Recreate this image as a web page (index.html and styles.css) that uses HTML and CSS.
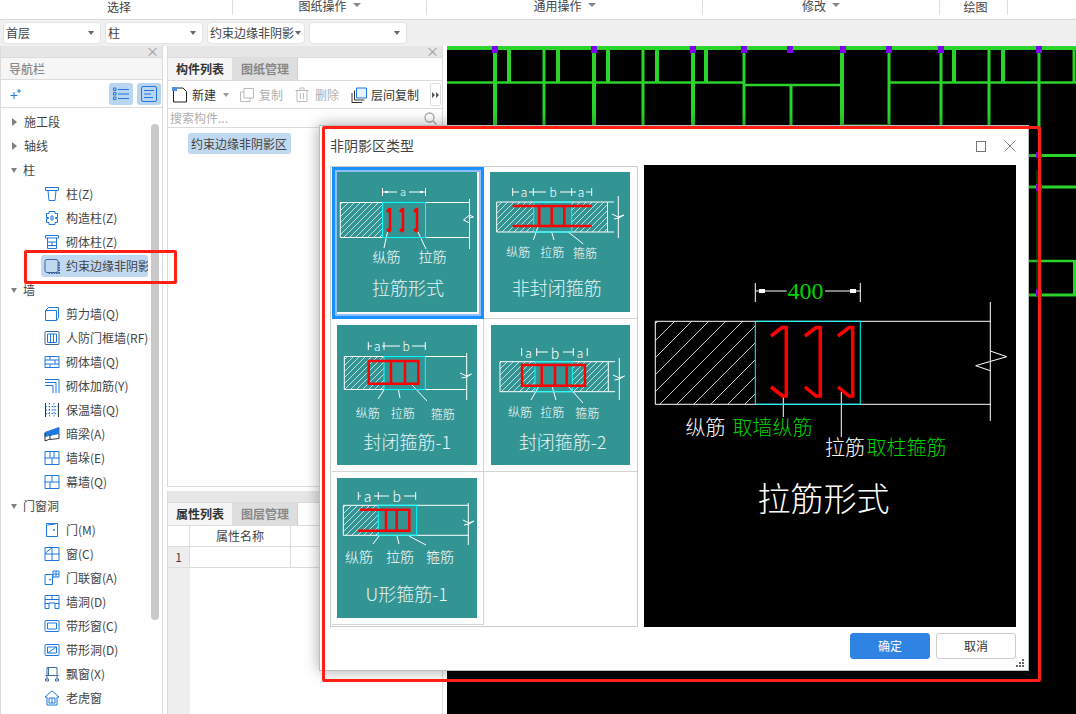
FILE: index.html
```html
<!DOCTYPE html>
<html lang="zh-CN">
<head>
<meta charset="utf-8">
<title>非阴影区类型</title>
<link rel="stylesheet" href="styles.css">
</head>
<body>
<svg class="defs" width="0" height="0">
  <defs>
    <pattern id="h6" patternUnits="userSpaceOnUse" width="6" height="6"><path d="M-1 7L7 -1M-1 1L1 -1M5 7L7 5" stroke="#fff" stroke-width=".7"/></pattern>
    <pattern id="h17" patternUnits="userSpaceOnUse" width="17" height="17"><path d="M0 17L17 0" stroke="#fff" stroke-width=".8"/></pattern>
  </defs>
</svg>

<header class="ribbon">
  <div class="rb rb-1"><span class="rb-low">选择</span></div>
  <div class="rb rb-2"><span>图纸操作</span><i class="caret caret-rb"></i></div>
  <div class="rb rb-3"><span>通用操作</span><i class="caret caret-rb"></i></div>
  <div class="rb rb-4"><span>修改</span><i class="caret caret-rb"></i></div>
  <div class="rb rb-5"><span class="rb-low">绘图</span></div>
</header>

<div class="selects">
  <div class="sel"><span>首层</span><i class="caret"></i></div>
  <div class="sel"><span>柱</span><i class="caret"></i></div>
  <div class="sel"><span>约束边缘非阴影</span><i class="caret"></i></div>
  <div class="sel"><span></span><i class="caret"></i></div>
</div>

<main class="work">
  <aside class="nav">
    <div class="bar"><span class="x">×</span></div>
    <div class="nav-title">导航栏</div>
    <div class="nav-tools">
      <svg class="plus" width="14" height="14" viewBox="0 0 14 14"><path d="M5 5v7M1.500 8.500h7M10 2v4M8 4h4" stroke="#1f78e0" fill="none"/></svg>
      <span class="nav-btn"><svg width="16" height="14" viewBox="0 0 16 14"><path d="M5 2.500h11M5 7h11M5 11.500h11" stroke="#1f78e0" fill="none"/><path d="M.5 1h2.500v2.500H.5zM.5 5.500h2.500V8H.5zM.5 10h2.500v2.500H.5z" stroke="#1f78e0" fill="none"/></svg></span>
      <span class="nav-btn"><svg width="16" height="16" viewBox="0 0 16 16"><rect x=".5" y=".5" width="15" height="15" rx="1.500" stroke="#1f78e0" fill="none"/><path d="M3 4.500h10M3 8h7M3 11.500h9" stroke="#1f78e0" fill="none"/></svg></span>
    </div>
    <div class="tree">
      <div class="scroll"></div>
      <div class="node"><i class="tri-r"></i>施工段</div>
      <div class="node"><i class="tri-r"></i>轴线</div>
      <div class="node"><i class="tri-d"></i>柱</div>
      <div class="leaf"><svg class="ic" viewBox="0 0 16 16"><path d="M1.500 1.500h13v3h-13zM4 4.500l1 10h6l1-10"/></svg>柱(Z)</div>
      <div class="leaf"><svg class="ic" viewBox="0 0 16 16"><path d="M5 1.500h6v2h2.500v4h-2v1h2v4H11v2H5v-2H2.500v-4h2v-1h-2v-4H5z"/><path d="M7 6h2v4H7z"/></svg>构造柱(Z)</div>
      <div class="leaf"><svg class="ic" viewBox="0 0 16 16"><path d="M1.500 1.500h13v2.500h-13zM3.500 4v10.500h9V4M3.500 8h9M3.500 11.500h9M8 8v3.500"/></svg>砌体柱(Z)</div>
      <div class="leaf"><span class="leaf-sel"><svg class="ic ic-dark" viewBox="0 0 16 16"><rect x="1" y="1.500" width="13" height="13" rx="2"/><path d="M15 4v11H4" stroke-dasharray="1.500 1" stroke-width="2"/></svg><span class="leaf-clip">约束边缘非阴影</span></span></div>
      <div class="node"><i class="tri-d"></i>墙</div>
      <div class="leaf"><svg class="ic" viewBox="0 0 16 16"><path d="M1.500 4.500h11v10h-11zM1.500 4.500l3-3h10v10l-2 3"/></svg>剪力墙(Q)</div>
      <div class="leaf"><svg class="ic ic-dark" viewBox="0 0 16 16"><rect x="1" y="1.500" width="14" height="13" rx="1"/><path d="M3.500 4h9v8.500h-9zM6.500 4v8.500M9.500 4v8.500" stroke="#1f78e0"/></svg>人防门框墙(RF)</div>
      <div class="leaf"><svg class="ic" viewBox="0 0 16 16"><path d="M1 2.500h14v11H1zM1 6h14M1 10h14M6 2.500V6M11 6v4M6 10v3.500"/></svg>砌体墙(Q)</div>
      <div class="leaf"><svg class="ic" viewBox="0 0 16 16"><path d="M1 1.500h14v13.500M1 4.500h11V15M1 7.500h8V15"/></svg>砌体加筋(Y)</div>
      <div class="leaf"><svg class="ic" viewBox="0 0 16 16"><path d="M1.500 1v14M14.500 1v14" stroke="#333"/><path d="M5.500 1v14M10 1v14M1.500 4.500h13M1.500 8h13M1.500 11.500h13" stroke-dasharray="1.500 1.500"/></svg>保温墙(Q)</div>
      <div class="leaf"><svg class="ic" viewBox="0 0 16 16"><path d="M1 6.500L15 1.500v6L1 10.500z" fill="#1f78e0"/><path d="M1 7v8l5-2V8.500M15 7.500v5l-9 1" stroke="#333"/></svg>暗梁(A)</div>
      <div class="leaf"><svg class="ic" viewBox="0 0 16 16"><path d="M1 1.500h14v13H1zM1 8h14M6 1.500V8M10 1.500V8M8 8v6.500"/></svg>墙垛(E)</div>
      <div class="leaf"><svg class="ic" viewBox="0 0 16 16"><path d="M1 1.500h14v13H1zM1 8h14M8 1.500V8M6 8v6.500"/></svg>幕墙(Q)</div>
      <div class="node"><i class="tri-d"></i>门窗洞</div>
      <div class="leaf"><svg class="ic" viewBox="0 0 16 16"><path d="M2.500 1.500h11v13h-11zM3.500 3l8-1"/><circle cx="10" cy="8" r=".6"/></svg>门(M)</div>
      <div class="leaf"><svg class="ic" viewBox="0 0 16 16"><path d="M1 1.500h14v13H1zM1 8h14M8 1.500v13M1.500 7l6-5"/></svg>窗(C)</div>
      <div class="leaf"><svg class="ic" viewBox="0 0 16 16"><path d="M1 4.500h7.500v10H1zM9 1h6v6H9zM12 1v6M9 4h6"/><circle cx="6" cy="9.500" r=".6"/></svg>门联窗(A)</div>
      <div class="leaf"><svg class="ic" viewBox="0 0 16 16"><path d="M1 1.500h14v13h-4V9H5v5.500H1zM1 5.500h14M8 1.500v4M1 9.500h4M11 9.500h4"/></svg>墙洞(D)</div>
      <div class="leaf"><svg class="ic" viewBox="0 0 16 16"><rect x="1" y="2.500" width="14" height="11" rx="1"/><path d="M3.500 5h9v6h-9z"/></svg>带形窗(C)</div>
      <div class="leaf"><svg class="ic" viewBox="0 0 16 16"><rect x="1" y="2.500" width="14" height="11" rx="1"/><path d="M3.500 5h9v6h-9zM3.500 11l9-6"/></svg>带形洞(D)</div>
      <div class="leaf"><svg class="ic" viewBox="0 0 16 16"><path d="M3 1.500h10V13M3 1.500V13M4.500 1.500V9M1.500 9.500h13M1.500 13h3v2h-3zM11.500 13h3v2h-3z" stroke="#3a6ea5"/></svg>飘窗(X)</div>
      <div class="leaf"><svg class="ic" viewBox="0 0 16 16"><path d="M8 .8L1 7l2 0v8h10V7l2 0zM5 8h6v5H5zM8 8v5"/></svg>老虎窗</div>
    </div>
  </aside>

  <section class="mid">
    <div class="panel panel-top">
      <div class="bar"><span class="x">×</span></div>
      <div class="tabs"><span class="tab on">构件列表</span><span class="tab">图纸管理</span></div>
      <div class="tools">
        <span class="tool"><svg class="tic" viewBox="0 0 16 16"><path d="M1.500 4v11h13V4.500L11 1H5" stroke="#222" fill="none"/><path d="M0 0h5v4H0z" fill="#4a90e2"/></svg>新建<i class="caret caret-tool"></i></span>
        <span class="tool off"><svg class="tic" viewBox="0 0 16 16"><path d="M5 1.500h9.500v9.500H5zM1.500 5H5M1.500 5v9.500H11V11" stroke="#bbb" fill="none"/></svg>复制</span>
        <span class="tool off"><svg class="tic" viewBox="0 0 16 16"><path d="M.5 3.500h13M5 3.500V1h4v2.500M2 3.500v11h10v-11M5.500 6v6M8.500 6v6" stroke="#bbb" fill="none"/></svg>删除</span>
        <span class="tool"><svg class="tic" viewBox="0 0 16 16"><path d="M5.500 1h10v10h-10z" stroke="#1f78e0" fill="#e8f2fd"/><path d="M3.500 3.500V13h10M1 6v9.500h10" stroke="#333" fill="none"/></svg>层间复制</span>
        <span class="more"><svg width="8" height="8" viewBox="0 0 8 8"><path d="M0 1l3 3-3 3zM4 1l3 3-3 3z" fill="#555"/></svg></span>
      </div>
      <div class="search"><span>搜索构件...</span><svg width="13" height="13" viewBox="0 0 13 13"><circle cx="5.500" cy="5.500" r="4.500" fill="none" stroke="#aaa" stroke-width="1.300"/><path d="M9 9l3.500 3.500" stroke="#aaa" stroke-width="1.300"/></svg></div>
      <div class="list"><span class="pill">约束边缘非阴影区</span></div>
    </div>
    <div class="panel panel-bottom">
      <div class="bar"></div>
      <div class="tabs tabs-b"><span class="tab on">属性列表</span><span class="tab">图层管理</span></div>
      <div class="props">
        <div class="p-h"></div><div class="p-h">属性名称</div><div class="p-h"></div>
        <div class="p-n">1</div><div class="p-c"></div><div class="p-c"></div>
        <div class="p-fill"></div><div class="p-blank"></div>
      </div>
    </div>
  </section>

  <svg class="canvas" viewBox="447 46 629 668" preserveAspectRatio="none">
    <g fill="none" stroke="#2ad42a">
      <path stroke-width="4" d="M447 48H1076M495 48V130M594 48V130M693 48V130M842 48V130M509 48V82M558 48V82M608 48V82M657 48V82M706 48V82M954 48V82M1003 48V82"/>
      <path stroke-width="3" d="M544 48V130M643 48V130M744 48V130M791 85V130M889 48V130M941 48V130M989 48V130M1074 48V82M1039 48V130"/>
      <path stroke-width="2.500" d="M447 82.500H744M889 82.500H1076M744 85H843M1028 261H1074"/>
      <path stroke-width="3" d="M1028 155.500H1076M1028 187H1076M1028 295H1076M1074.500 260V296"/>
      <path stroke-width="1" stroke="#176d17" d="M843 124.500H889M1037 170V296"/>
    </g>
    <g fill="#8000f0">
      <rect x="492" y="46" width="6" height="7"/><rect x="591" y="46" width="6" height="7"/><rect x="690" y="46" width="6" height="7"/><rect x="741" y="46" width="6" height="7"/><rect x="787" y="46" width="6" height="7"/><rect x="840" y="46" width="6" height="7"/><rect x="886" y="46" width="6" height="7"/><rect x="938" y="46" width="6" height="7"/><rect x="1036" y="46" width="6" height="7"/>
      <rect x="1036" y="152" width="6" height="6"/><rect x="1036" y="184" width="6" height="7"/><rect x="1036" y="289" width="6" height="7"/>
    </g>
  </svg>
</main>

<div class="dialog">
  <div class="d-title"><span>非阴影区类型</span>
    <span class="d-ctrl">
      <svg width="10" height="11" viewBox="0 0 10 11"><rect x=".5" y=".5" width="9" height="10" fill="none" stroke="#777"/></svg>
      <svg width="12" height="12" viewBox="0 0 12 12"><path d="M.5 .5l11 11M11.500 .5l-11 11" stroke="#888" fill="none"/></svg>
    </span>
  </div>
  <div class="d-body">
    <div class="d-grid">
      <div class="cell cell-sel">
        <svg class="thumb" viewBox="0 0 140 140">
          <rect x="3.300" y="30.500" width="42" height="35" class="hatch"/>
          <path class="w" d="M3.300 30.500H132.500M3.300 65.500H132.500M3.300 30.500V65.500M132.500 27V77M132.500 43l-6 5 6 3M132.500 43l4 2-4 1M45.500 16V24M88.500 16V24M45.500 20H60M72 20H88.500M50.500 60L47 76M81 60L89 77"/>
          <path class="blk" d="M48 19h3v2h-3zM83 19h3v2h-3z"/>
          <rect x="45.500" y="30.500" width="43" height="35" class="c"/>
          <path class="r r3" d="M53 36V59M50 40l3-4M50 57l3 3M66 36V59M63 40l3-4M63 57l3 3M80 36V59M77 40l3-4M77 57l3 3"/>
          <text x="49.500" y="84" class="t14">纵筋</text><text x="95.500" y="84" class="t14">拉筋</text>
          <text x="66" y="19" class="t10">a</text>
          <text x="71" y="115" class="t18">拉筋形式</text>
        </svg>
      </div>
      <div class="cell cell-r">
        <svg class="thumb" viewBox="0 0 140 140">
          <rect x="6.700" y="30" width="37" height="30" class="hatch"/><rect x="81.700" y="30" width="36" height="30" class="hatch"/>
          <path class="w" d="M6.700 30H124M6.700 60H124M6.700 30V60M117.500 30V60M128.300 24V66M122 42l6 3 6-2-5 3-5 1M22.700 16V24M43.300 16V24M81.700 16V24M101.700 16V24M22.700 20H29M39 20H56M70 20H86M96 20H101.700M48.300 54l-5 14M61.700 60L64 68M78.300 60L93.300 72"/>
          <rect x="43.700" y="30" width="38" height="30" class="c"/>
          <path class="r r3" d="M22.700 34H101.700M22.700 54H101.700M49.300 34V54M61.700 34V54M74.300 34V54"/>
          <text x="34" y="19.500" class="t12">a</text><text x="63" y="19.500" class="t12">b</text><text x="91" y="19.500" class="t12">a</text>
          <text x="28.300" y="79" class="t12">纵筋</text><text x="62.300" y="79" class="t12">拉筋</text><text x="95" y="80" class="t12">箍筋</text>
          <text x="66.700" y="115" class="t18">非封闭箍筋</text>
        </svg>
      </div>
      <div class="cell">
        <svg class="thumb" viewBox="0 0 140 140">
          <rect x="7.300" y="31.500" width="40" height="33" class="hatch"/>
          <path class="w" d="M7.300 31.500H129.700M7.300 64.500H129.700M7.300 31.500V64.500M129.700 28V75M123 48l6.500 3 5-2-5 3-5 1M31.300 17V25M47 17V25M88.300 17V25M31.300 21H35M45 21H63M75 21H88.300M47 65L41 74M61.500 65L63 73M75 60L90 76"/>
          <rect x="47" y="31.500" width="41.300" height="33" class="c"/>
          <path class="r r3" d="M31.700 36H81.300V58.700H31.700zM54 36V58.700M68 36V58.700"/>
          <text x="40.300" y="20.500" class="t12">a</text><text x="69" y="20.500" class="t12">b</text>
          <text x="30.700" y="87" class="t12">纵筋</text><text x="65.700" y="87" class="t12">拉筋</text><text x="105.700" y="88" class="t12">箍筋</text>
          <text x="70.300" y="115.500" class="t18">封闭箍筋-1</text>
        </svg>
      </div>
      <div class="cell cell-r">
        <svg class="thumb" viewBox="0 0 140 140">
          <rect x="0" y="0" width="1" height="140" class="blank"/>
          <rect x="10" y="36.700" width="35" height="30" class="hatch"/><rect x="82.300" y="36.700" width="36" height="30" class="hatch"/>
          <path class="w" d="M10 36.700H125M10 66.700H125M10 36.700V66.700M118.300 36.700V66.700M129.300 33V75M123 50l6.500 3 5-2-5 3-5 1M31.700 23V31M46.700 23V31M83.300 23V31M97.300 23V31M46.700 27H58M73 27H83.300M49 61L41 75M62 61L66 75M78 61L93 78"/>
          <rect x="45" y="36.700" width="37.300" height="30" class="c"/>
          <path class="r r3" d="M32 40H95V60.700H32zM51.700 40V60.700M65 40V60.700M76.700 40V60.700"/>
          <text x="38.500" y="27" class="t12">a</text><text x="65" y="27.500" class="t14">b</text><text x="90" y="27" class="t12">a</text>
          <text x="30" y="86" class="t12">纵筋</text><text x="62.300" y="86" class="t12">拉筋</text><text x="97.300" y="87" class="t12">箍筋</text>
          <text x="72.700" y="115.500" class="t18">封闭箍筋-2</text>
        </svg>
      </div>
      <div class="cell cell-end">
        <svg class="thumb" viewBox="0 0 140 140">
          <rect x="6.300" y="27.300" width="35" height="30" class="hatch"/>
          <path class="w" d="M6.300 27.300H131.300M6.300 57.300H131.300M6.300 27.300V57.300M131.300 25V67M126 42l6 3 5-2-5 3-5 1M21.300 14V22M41.300 14V22M78.700 14V22M21.300 18H24M37 18H52M67 18H78.700M42 58L36 66M60 58L62 66M72 58L89 67"/>
          <rect x="41.300" y="27.300" width="38.400" height="30" class="c"/>
          <path class="r r3" d="M23 31.700H72.300V52.700H21.300M49 31.700V52.700M59.700 31.700V52.700"/>
          <text x="30.700" y="18" class="t14">a</text><text x="59.700" y="18" class="t14">b</text>
          <text x="22" y="78" class="t14">纵筋</text><text x="63" y="78" class="t14">拉筋</text><text x="103" y="78" class="t14">箍筋</text>
          <text x="69.700" y="115" class="t18">U形箍筋-1</text>
        </svg>
      </div>
    </div>
    <svg class="preview" viewBox="0 0 372 462">
      <rect x="11.300" y="156.300" width="100" height="83" fill="url(#h17)"/>
      <path class="w" d="M11.300 156.300H346.300M11.300 239.300H346.300M11.300 156.300V239.300M346.300 137V256M346.300 186L362.700 191.700 331.700 200.700 346.300 205.700M111.300 118V137M216.300 118V137M111.300 126H142.700M181 126H216.300M139.300 232V252M197.300 227V272"/>
      <path fill="#fff" d="M115 124h6v4h-6zM206 124h6v4h-6z"/>
      <rect x="111.300" y="156.300" width="105" height="83" class="c"/>
      <path class="r r4" d="M127 171L138 162.500H142.300V231H138.500L127 222M161 171L172 162.500H176.300V231H172L161 222M194 171L205 162.500H208.700V231H205L194 222"/>
      <text x="161.500" y="125.500" class="p-400">400</text>
      <text x="61.500" y="261" class="p-w">纵筋</text>
      <text x="128.500" y="261" class="p-g">取墙纵筋</text>
      <text x="201" y="281" class="p-w">拉筋</text>
      <text x="262.500" y="281" class="p-g">取柱箍筋</text>
      <text x="179.500" y="332" class="p-t">拉筋形式</text>
    </svg>
  </div>
  <div class="d-foot">
    <button class="btn btn-ok">确定</button>
    <button class="btn">取消</button>
  </div>
  <svg class="grip" width="9" height="9" viewBox="0 0 9 9"><path d="M6 0h2v2H6zM3 3h2v2H3zM6 3h2v2H6zM0 6h2v2H0zM3 6h2v2H3zM6 6h2v2H6z" fill="#666"/></svg>
</div>

<div class="mark mark-tree"></div>
<div class="mark mark-dialog"></div>
</body>
</html>
```

FILE: styles.css
```css
* { box-sizing: border-box; }
html, body { margin: 0; padding: 0; }
body {
  position: relative;
  width: 1076px;
  height: 714px;
  overflow: hidden;
  background: #fff;
  color: #333;
  font: 12px/16px "Noto Sans CJK SC", "Noto Sans", sans-serif;
  display: flex;
  flex-direction: column;
}
.defs { position: absolute; }

.ribbon {
  flex: none;
  display: flex;
  height: 20px;
  border-bottom: 1px solid #d9d9d9;
  background: #fff;
  overflow: hidden;
}
.rb {
  height: 15px;
  border-right: 1px solid #dedede;
  display: flex;
  justify-content: center;
  gap: 6px;
  line-height: 12px;
  color: #444;
}
.rb-low { line-height: 14px; }
.rb-1 { width: 233px; padding-left: 6px; }
.rb-2 { width: 194px; }
.rb-3 { width: 276px; }
.rb-4 { width: 237px; }
.rb-5 { width: 68px; padding-left: 4px; }
.caret {
  display: inline-block;
  width: 0;
  height: 0;
  border-left: 3.500px solid transparent;
  border-right: 3.500px solid transparent;
  border-top: 4px solid #666;
}
.caret-rb { margin-top: 3px; border-left-width: 4px; border-right-width: 4px; border-top-color: #888; }

.selects {
  flex: none;
  height: 26px;
  background: #f0f0f0;
  display: flex;
  gap: 4px;
  padding: 2px 0 0 3px;
}
.sel {
  width: 98px;
  height: 22px;
  background: #fff;
  border: 1px solid #e4e4e4;
  border-radius: 4px;
  display: flex;
  align-items: center;
  justify-content: space-between;
  padding: 0 6px 0 2px;
  white-space: nowrap;
  color: #444;
}
.sel:nth-child(3) { padding-right: 3px; }

.work { flex: 1; display: flex; min-height: 0; }

.bar {
  height: 12px;
  background: #e6e6e6;
  border-bottom: 1px solid #dcdcdc;
  position: relative;
}
.x {
  position: absolute;
  right: 3px;
  top: -2px;
  font-size: 13px;
  line-height: 14px;
  color: #999;
}

.nav {
  flex: none;
  width: 163px;
  border-left: 1px solid #dcdcdc;
  border-right: 1px solid #dcdcdc;
  display: flex;
  flex-direction: column;
}
.nav-title {
  height: 22px;
  line-height: 21px;
  padding-left: 8px;
  color: #8a8a8a;
  font-weight: 500;
  background: #f6f6f6;
  border-bottom: 1px solid #dcdcdc;
}
.nav-tools {
  height: 28px;
  border-bottom: 1px solid #dcdcdc;
  display: flex;
  align-items: center;
  padding-left: 8px;
  gap: 4px;
}
.plus { margin-right: 82px; }
.nav-btn {
  width: 24px;
  height: 22px;
  background: #b9d5f2;
  border-radius: 3px;
  display: flex;
  align-items: center;
  justify-content: center;
}
.tree { flex: 1; position: relative; padding-top: 2px; overflow: hidden; }
.scroll {
  position: absolute;
  left: 150px;
  top: 16px;
  width: 8px;
  height: 496px;
  background: #c9c9c9;
  border-radius: 4px;
}
.node, .leaf {
  height: 24px;
  line-height: 24px;
  display: flex;
  align-items: center;
  white-space: nowrap;
  color: #444;
}
.node { padding-left: 11px; }
.tri-r {
  width: 0; height: 0; margin: 0 7px 0 0;
  border-top: 4px solid transparent;
  border-bottom: 4px solid transparent;
  border-left: 5px solid #808080;
}
.tri-d {
  width: 0; height: 0; margin: 0 6px 0 -1px;
  border-left: 3.500px solid transparent;
  border-right: 3.500px solid transparent;
  border-top: 5px solid #808080;
}
.leaf { padding-left: 43px; }
.ic {
  flex: none;
  width: 16px;
  height: 16px;
  margin-right: 6px;
  fill: none;
  stroke: #1f78e0;
  stroke-width: 1;
}
.ic-dark { stroke: #3a6596; }
.leaf-sel {
  display: flex;
  align-items: center;
  width: 107px;
  height: 22px;
  margin-left: -3px;
  padding-left: 3px;
  background: #c1d8f1;
  border-radius: 3px;
  overflow: hidden;
}
.leaf-clip { overflow: hidden; }

.mid {
  flex: none;
  width: 276px;
  margin-left: 4px;
  display: flex;
  flex-direction: column;
  gap: 4px;
}
.panel {
  border-left: 1px solid #dcdcdc;
  border-right: 1px solid #dcdcdc;
  display: flex;
  flex-direction: column;
}
.panel-top { height: 441px; border-bottom: 1px solid #dcdcdc; }
.panel-bottom { flex: 1; min-height: 0; }
.tabs {
  height: 23px;
  display: flex;
  background: #fff;
  border-bottom: 1px solid #dcdcdc;
}
.tabs-b { height: 23px; margin-top: 0; }
.tab {
  width: 65px;
  text-align: center;
  line-height: 22px;
  background: #dedede;
  color: #888;
  font-weight: 700;
  border-right: 1px solid #d0d0d0;
}
.tab.on { background: #f5f5f5; color: #333; border-right: 1px solid #dcdcdc; }
.tools {
  height: 28px;
  border-bottom: 1px solid #dcdcdc;
  display: flex;
  align-items: center;
  padding-left: 4px;
  position: relative;
}
.tool { display: flex; align-items: center; margin-right: 12px; color: #333; }
.tool.off { color: #b0b0b0; }
.tic { width: 16px; height: 16px; margin-right: 4px; }
.caret-tool { margin-left: 7px; margin-right: -2px; border-top-color: #999; }
.more {
  position: absolute;
  right: 1px;
  top: 2px;
  width: 11px;
  height: 23px;
  border: 1px solid #e0e0e0;
  border-radius: 2px;
  display: flex;
  align-items: center;
  justify-content: center;
}
.search {
  height: 19px;
  border-bottom: 1px solid #dcdcdc;
  display: flex;
  align-items: center;
  justify-content: space-between;
  padding: 0 5px 0 2px;
  color: #b0b0b0;
}
.list { flex: 1; padding: 5px 0 0 20px; }
.pill {
  display: inline-block;
  width: 103px;
  height: 21px;
  line-height: 21px;
  padding-left: 3px;
  background: #c1d8f1;
  border-radius: 3px;
  color: #444;
  white-space: nowrap;
}
.props {
  flex: 1;
  display: grid;
  grid-template-columns: 22px 101px 1fr;
  grid-template-rows: 21px 21px 1fr;
}
.p-h, .p-c, .p-n {
  border-right: 1px solid #dcdcdc;
  border-bottom: 1px solid #dcdcdc;
  text-align: center;
  line-height: 20px;
  color: #444;
}
.p-n { background: #eee; }
.p-fill { background: #eee; }
.p-blank { grid-column: 2 / 4; }

.canvas {
  flex: none;
  width: 629px;
  height: 668px;
  margin-left: 4px;
  background: #000;
  display: block;
}

.dialog {
  position: absolute;
  left: 319px;
  top: 125px;
  width: 710px;
  height: 546px;
  background: #fff;
  border: 1px solid #bdbdbd;
  box-shadow: 0 0 14px rgba(0, 0, 0, .35);
  padding-left: 10px;
}
.d-title {
  height: 40px;
  display: flex;
  justify-content: space-between;
  align-items: center;
  font-size: 14px;
  color: #444;
  padding: 0 12px 2px 0;
}
.d-ctrl { display: flex; gap: 18px; align-items: center; padding-top: 2px; }
.d-body { display: flex; gap: 6px; margin-top: -1px; }
.d-grid {
  width: 308px;
  margin-top: 1px;
  height: 461px;
  border: 1px solid #ccc;
  padding: 0 0 1px 1px;
  display: grid;
  grid-template-columns: 152px 153px;
  grid-template-rows: 152px 153px 153px;
}
.cell {
  border-right: 1px solid #d4d4d4;
  border-bottom: 1px solid #d4d4d4;
  padding: 6px 0 0 5px;
}
.cell-r { border-right: 0; padding-left: 6px; }
.cell:nth-child(2) { padding-top: 5px; }
.cell-sel {
  padding-top: 5px;
  position: relative;
  border-bottom: 0;
  border-right: 0;
  box-shadow: inset 0 0 0 3px #1890ff, inset 0 0 0 5px #8fc0f5;
}
.thumb { display: block; width: 140px; height: 140px; background: #339494; }
.blank { fill: #fff; }
.blk { fill: #fff; }
.hatch { fill: url(#h6); }
.w { fill: none; stroke: #fff; stroke-width: 1; }
.c { fill: none; stroke: #0ff; stroke-width: 1; }
.r { fill: none; stroke: #f00; stroke-width: 2; }
.r3 { stroke-width: 2.500; }
.r4 { stroke-width: 3.500; }
.thumb text, .preview text {
  text-anchor: middle;
  dominant-baseline: central;
  fill: #fff;
  font-family: "Noto Sans CJK SC", sans-serif;
  font-weight: 300;
}
.t10 { font-size: 11px; }
.t12 { font-size: 12px; }
.t14 { font-size: 14px; }
.thumb .t18 { font-size: 18px; fill: #e6f5f5; }
.preview { display: block; width: 372px; height: 462px; background: #000; }
.preview .p-400 { font: 24px "Liberation Serif", serif; fill: #00d400; }
.preview .p-w { font-size: 20px; }
.preview .p-g { font-size: 20px; fill: #00d400; }
.preview .p-t { font-size: 33px; }

.d-foot {
  display: flex;
  justify-content: flex-end;
  gap: 6px;
  padding: 6px 12px 0 0;
}
.btn {
  width: 80px;
  height: 26px;
  border: 1px solid #ccc;
  border-radius: 3px;
  background: #fff;
  color: #333;
  font: inherit;
  padding: 0;
}
.btn-ok { background: #2f84e3; border-color: #2f84e3; color: #fff; }
.grip { position: absolute; right: 3px; bottom: 2px; }

.mark {
  position: absolute;
  border: 3px solid #ff1f14;
  border-radius: 2px;
  pointer-events: none;
}
.mark-tree { left: 24px; top: 250px; width: 153px; height: 34px; }
.mark-dialog { left: 322px; top: 126px; width: 719px; height: 556px; }
```
